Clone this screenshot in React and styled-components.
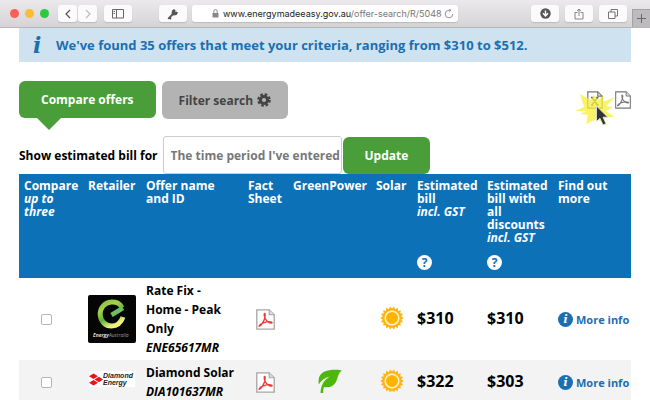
import React, { useState } from 'react'
import styled, { createGlobalStyle } from 'styled-components'

const offers = [
  { name: 'Rate Fix - Home - Peak Only', id: 'ENE65617MR', retailer: 'energy', green: false, bill: '$310', discounted: '$310' },
  { name: 'Diamond Solar', id: 'DIA101637MR', retailer: 'diamond', green: true, bill: '$322', discounted: '$303' },
]

const columns = [64, 58, 102, 45, 83, 41, 70, 71, 78]

function BrowserBar() {
  return (
    <Toolbar>
      <Lights>
        <Light color="#fb5f58" />
        <Light color="#fcbc33" />
        <Light color="#2bc840" />
      </Lights>
      <NavGroup>
        <NavButton aria-label="Back">
          <svg width="8" height="12" viewBox="0 0 8 12"><path d="M6 2L2 6l4 4" fill="none" stroke="#555" strokeWidth="1.2" /></svg>
        </NavButton>
        <NavButton aria-label="Forward">
          <svg width="8" height="12" viewBox="0 0 8 12"><path d="M2 2l4 4-4 4" fill="none" stroke="#bbb" strokeWidth="1.2" /></svg>
        </NavButton>
      </NavGroup>
      <BarButton aria-label="Sidebar">
        <svg width="12" height="10" viewBox="0 0 12 10"><path d="M.5.5h11v8.500H.5zM4.500.5v8.500M1.500 2.500h1.500M1.500 4.500h1.500" fill="none" stroke="#666" /></svg>
      </BarButton>
      <KeyButton aria-label="Passwords">
        <svg width="12" height="12" viewBox="0 0 12 12">
          <path d="M6.500 5.500L1.200 10.800M2.500 9.500l1.500 1.500" stroke="#555" strokeWidth="1.800" />
          <path d="M7 1l4 3.800-1.500 2.200-3 .5-2-2 .5-3z" fill="#555" />
          <circle cx="9" cy="3.200" r=".8" fill="#eee" />
        </svg>
      </KeyButton>
      <Address>
        <svg width="7" height="9" viewBox="0 0 7 9"><path d="M.5 4h6v4.500h-6z" fill="#888" /><path d="M1.800 4V2.300a1.700 1.700 0 013.400 0V4" fill="none" stroke="#888" /></svg>
        <Url>www.energymadeeasy.gov.au<span>/offer-search/R/5048</span></Url>
        <svg width="10" height="10" viewBox="0 0 10 10"><path d="M8.800 5A3.800 3.800 0 115 1.200h1.500M5 0l2 1.300L5.200 3" fill="none" stroke="#888" strokeWidth=".9" /></svg>
      </Address>
      <ToolGroup>
        <BarButton aria-label="Downloads">
          <svg width="11" height="11" viewBox="0 0 11 11"><circle cx="5.500" cy="5.500" r="5.200" fill="#555" /><path d="M5.500 2.500v5M3 5.200l2.500 2.800L8 5.200" fill="none" stroke="#fff" strokeWidth="1.400" /></svg>
        </BarButton>
        <BarButton aria-label="Share">
          <svg width="10" height="12" viewBox="0 0 10 12"><path d="M3.500 4.500h-2.500v6.500h8V4.500H6.500M5 8V1M3 3l2-2 2 2" fill="none" stroke="#777" strokeWidth=".9" /></svg>
        </BarButton>
        <BarButton aria-label="Show tabs">
          <svg width="10" height="10" viewBox="0 0 10 10"><path d="M.5 3h6.500v6.500H.5zM3 3V.5h6.500V7H7" fill="none" stroke="#666" strokeWidth=".9" /></svg>
        </BarButton>
      </ToolGroup>
      <NewTab aria-label="New tab">
        <svg width="9" height="9" viewBox="0 0 9 9"><path d="M4.500 0v9M0 4.500h9" stroke="#666" /></svg>
      </NewTab>
    </Toolbar>
  )
}

function PdfIcon({ stroke = '#a5a5a5', mark = '#ee3a3a', width = 19, height = 21 }) {
  return (
    <svg width={width} height={height} viewBox="0 0 19 21">
      <path d="M.8.8h12.400l5 5v14.400H.8z" fill="#fff" stroke={stroke} strokeWidth="1.300" />
      <path d="M13.200.8v5h5" fill="#ddd" stroke={stroke} strokeWidth="1.100" />
      <path d="M3 17.200c1.500.6 5-5 5.800-8.200.5-2.500.6-4.500-.1-4.500-1 0-.5 3.500.8 5.700 1.500 2.400 4.500 4 6.300 3.800 1.200-.4-.6-1.500-3.600-1.300-3.200.2-8.400 2.300-9.200 4.500z" fill="none" stroke={mark} strokeWidth="1.300" />
    </svg>
  )
}

function ExcelIcon() {
  return (
    <svg width="16" height="18" viewBox="0 0 16 18">
      <path d="M.8.8h10l4.400 4.400v12H.8z" fill="#fff" stroke="#777" strokeWidth="1.200" />
      <path d="M10.800.8v4.400h4.400" fill="none" stroke="#777" strokeWidth="1.200" />
      <path d="M5 6.500l5.500 7.500M10.500 6.500L5 14M4 6.500h2.500M9.200 6.500h2.300M4 14h2.300M9 14h2.500" stroke="#666" strokeWidth="1.400" />
    </svg>
  )
}

function SunIcon() {
  const rays = Array.from({ length: 36 }, (_, i) => {
    const r = i % 2 ? 9.4 : 11.8
    const a = (i * Math.PI) / 18
    return `${12 + r * Math.cos(a)},${12 + r * Math.sin(a)}`
  }).join(' ')
  return (
    <svg width="24" height="24" viewBox="0 0 24 24">
      <polygon points={rays} fill="#fdb515" />
      <circle cx="12" cy="12" r="6.800" fill="#fdb400" stroke="#fff3cf" strokeWidth="1.500" />
    </svg>
  )
}

function LeafIcon() {
  return (
    <svg width="24" height="24" viewBox="0 0 24 24">
      <path d="M24 1.500C22 .6 11 0 5.500 3 .8 6 .2 10 .8 15.500c2-4 6-6.500 11-8C7 10.500 3 14.500 2.500 24h2.700c-.2-2.500.2-4.500.8-6 5 1.200 9.500-.5 12-5 1.800-3.500 2-9 6-11.500z" fill="#4db80b" />
    </svg>
  )
}

function GearIcon() {
  return (
    <svg width="14" height="14" viewBox="0 0 14 14">
      <circle cx="7" cy="7" r="5.600" fill="none" stroke="#444" strokeWidth="2.400" strokeDasharray="2.600 1.798" />
      <circle cx="7" cy="7" r="3.600" fill="none" stroke="#444" strokeWidth="3" />
    </svg>
  )
}

function RetailerLogo({ retailer }) {
  if (retailer === 'diamond') {
    return (
      <DiamondLogo>
        <svg width="14" height="13" viewBox="0 0 14 13">
          <path d="M0 3.200L4.500.5 9 3.200 4.500 6zM5.500 6.500L10 3.800l4 2.700-4 2.700zM0 9.800L4.500 7 9 9.800l-4.500 2.700z" fill="#e3161b" />
        </svg>
        <span>Diamond<br />Energy</span>
      </DiamondLogo>
    )
  }
  return (
    <svg width="48" height="48" viewBox="0 0 48 48" role="img" aria-label="EnergyAustralia">
      <defs>
        <linearGradient id="swirl" x1="0" y1="0" x2=".5" y2="1">
          <stop offset="0" stopColor="#7cc142" />
          <stop offset=".3" stopColor="#a9d14a" />
          <stop offset=".65" stopColor="#5fb03a" />
          <stop offset="1" stopColor="#eef27a" />
        </linearGradient>
      </defs>
      <rect width="48" height="48" rx="2" fill="#050505" />
      <path d="M34 12.500C32 8.500 27.500 6.500 23 7 16.500 7.500 12 13 12.200 19.500 12.500 26.500 17.500 31 23.500 31c5.500 0 9.500-3.500 11.500-9" fill="none" stroke="url(#swirl)" strokeWidth="5" />
      <path d="M23.500 20L35 13" stroke="#6dbd62" strokeWidth="4.500" />
      <text x="5" y="42" fontSize="5" fontWeight="bold" fontStyle="italic" fontFamily="Open Sans, sans-serif" fill="#ddd">Energy<tspan fontWeight="normal" fill="#999">Australia</tspan></text>
    </svg>
  )
}

function Downloads() {
  return (
    <DownloadLinks>
      <DownloadLink href="#excel" aria-label="Download spreadsheet">
        <ExcelIcon />
        <Pointer>
          <svg width="41" height="36" viewBox="0 0 41 36">
            <path d="M0 20l9-4L5 3l11 6 3-5 4 5 6-5-1 7 12-5-9 9 7 1-7 4 8 6-10 0 3 9-10-7-11 5 2-9-8-1 6-3z" fill="#f5ef36" opacity=".75" />
            <path d="M21.500 15v15.500l3.500-3.200 3 6.700 3-1.300-3-6.500h4.800z" fill="#333" stroke="#eee" strokeWidth=".8" />
          </svg>
        </Pointer>
      </DownloadLink>
      <DownloadLink href="#pdf" aria-label="Download PDF">
        <PdfIcon stroke="#777" mark="#777" width={16} height={18} />
      </DownloadLink>
    </DownloadLinks>
  )
}

function OfferRow({ offer }) {
  const [checked, setChecked] = useState(false)
  return (
    <Row>
      <Cell $indent>
        <Check checked={checked} onChange={e => setChecked(e.target.checked)} aria-label={`Compare ${offer.name}`} />
      </Cell>
      <Cell><RetailerLogo retailer={offer.retailer} /></Cell>
      <NameCell>{offer.name}<br /><em>{offer.id}</em></NameCell>
      <Cell $center><a href="#fact-sheet" aria-label="Fact sheet"><PdfIcon /></a></Cell>
      <Cell $center $raised>{offer.green && <LeafIcon />}</Cell>
      <Cell $center $raised><SunIcon /></Cell>
      <Cell><Price>{offer.bill}</Price></Cell>
      <Cell><Price>{offer.discounted}</Price></Cell>
      <Cell>
        <MoreLink href="#more"><InfoBadge>i</InfoBadge>More info</MoreLink>
      </Cell>
    </Row>
  )
}

function App() {
  return (
    <Page>
      <GlobalStyle />
      <BrowserBar />
      <Content>
        <Notice>
          <NoticeIcon>i</NoticeIcon>
          We've found 35 offers that meet your criteria, ranging from $310 to $512.
        </Notice>
        <Tabs>
          <CompareTab>Compare offers</CompareTab>
          <FilterTab>Filter search <GearIcon /></FilterTab>
          <Downloads />
        </Tabs>
        <BillForm onSubmit={e => e.preventDefault()}>
          <label htmlFor="period">Show estimated bill for</label>
          <Period id="period">
            <option>The time period I've entered</option>
          </Period>
          <GreenButton>Update</GreenButton>
        </BillForm>
        <Table>
          <colgroup>
            {columns.map((width, i) => <col key={i} width={width} />)}
          </colgroup>
          <thead>
            <tr>
              <Heading>Compare <em>up to three</em></Heading>
              <Heading>Retailer</Heading>
              <Heading>Offer name<br />and ID</Heading>
              <Heading>Fact Sheet</Heading>
              <Heading>GreenPower</Heading>
              <Heading>Solar</Heading>
              <Heading>
                <HeadingBox><span>Estimated bill<br /><em>incl. GST</em></span><Help aria-label="About estimated bill">?</Help></HeadingBox>
              </Heading>
              <Heading>
                <HeadingBox><span>Estimated bill with all discounts<br /><em>incl. GST</em></span><Help aria-label="About discounts">?</Help></HeadingBox>
              </Heading>
              <Heading>Find out<br />more</Heading>
            </tr>
          </thead>
          <tbody>
            {offers.map(offer => <OfferRow key={offer.id} offer={offer} />)}
          </tbody>
        </Table>
      </Content>
    </Page>
  )
}

export default App

// #region styles
const GlobalStyle = createGlobalStyle`
  * {
    box-sizing: border-box;
  }
  body {
    margin: 0;
    background: #fff;
    color: #000;
    font: bold 12px/19px 'Open Sans', sans-serif;
  }
  button, select {
    font: inherit;
  }
  svg {
    display: block;
    flex: none;
  }
`

const Page = styled.div`
  height: 100vh;
  overflow: hidden;
`

const Toolbar = styled.header`
  display: flex;
  align-items: center;
  height: 28px;
  padding-left: 10px;
  background: linear-gradient(#ebe9eb, #d5d3d5);
  border-bottom: 1px solid #b8b5b8;
`

const Lights = styled.div`
  display: flex;
  gap: 6px;
  margin-right: 9px;
`

const Light = styled.span`
  width: 9px;
  height: 9px;
  border-radius: 50%;
  background: ${props => props.color};
`

const BarButton = styled.button.attrs({ type: 'button' })`
  display: flex;
  align-items: center;
  justify-content: center;
  flex: none;
  width: 28px;
  height: 17px;
  padding: 0;
  border: 0;
  border-radius: 3px;
  background: #fbfbfb;
  box-shadow: 0 1px 1px #bbb;
`

const NavGroup = styled.div`
  display: flex;
  gap: 1px;
  margin-right: 7px;
`

const NavButton = styled(BarButton)`
  width: 19px;
`

const KeyButton = styled(BarButton)`
  margin: 0 5px 0 27px;
`

const Address = styled.div`
  display: flex;
  align-items: center;
  flex: 1;
  min-width: 0;
  height: 17px;
  padding: 0 4px 0 20px;
  border-radius: 3px;
  background: #fff;
  box-shadow: 0 1px 1px #bbb;
`

const Url = styled.span`
  flex: 1;
  margin-left: 4px;
  font: 9px/17px Inter, sans-serif;
  color: #222;
  white-space: nowrap;

  span {
    color: #777;
  }
`

const ToolGroup = styled.div`
  display: flex;
  gap: 6px;
  margin: 0 5px 0 73px;
`

const NewTab = styled(BarButton)`
  align-self: flex-end;
  width: 18px;
  height: 18px;
  border: 1px solid #a5a2a5;
  border-width: 1px 0 0 1px;
  border-radius: 0;
  background: #bebbbe;
  box-shadow: none;
`

const Content = styled.main`
  padding: 0 19px;
`

const Notice = styled.p`
  display: flex;
  align-items: center;
  height: 34px;
  margin: 0 0 19px;
  padding: 0 14px;
  background: #cfe2ef;
  color: #1b6fb1;
  font-size: 13px;
`

const NoticeIcon = styled.span`
  width: 23px;
  font: italic bold 22px/34px 'DejaVu Serif', serif;
`

const Tabs = styled.div`
  display: flex;
  align-items: flex-start;
  gap: 6px;
`

const GreenButton = styled.button`
  padding: 9px 22px;
  border: 0;
  border-radius: 6px;
  background: #4a9e3a;
  color: #fff;
`

const CompareTab = styled(GreenButton).attrs({ type: 'button' })`
  position: relative;

  &::after {
    content: '';
    position: absolute;
    top: 100%;
    left: 18px;
    border: 12px solid transparent;
    border-top-color: #4a9e3a;
    border-bottom: 0;
  }
`

const FilterTab = styled.button.attrs({ type: 'button' })`
  display: flex;
  align-items: center;
  gap: 4px;
  height: 38px;
  padding: 0 17px;
  border: 0;
  border-radius: 6px;
  background: #b3b3b3;
  color: #444;
`

const DownloadLinks = styled.div`
  display: flex;
  gap: 12px;
  margin: 10px 0 0 auto;
`

const DownloadLink = styled.a`
  position: relative;
`

const Pointer = styled.span`
  position: absolute;
  top: 0;
  left: -12px;
`

const BillForm = styled.form`
  display: flex;
  align-items: center;
  margin-top: 17px;
`

const Period = styled.select`
  appearance: none;
  width: 179px;
  height: 38px;
  margin: 0 1px 0 5px;
  padding: 0 0 0 7px;
  border: 1px solid #ccc;
  border-radius: 3px;
  background: #fff;
  color: #777;
`

const Table = styled.table`
  width: 100%;
  table-layout: fixed;
  border-collapse: collapse;
`

const Heading = styled.th`
  height: 104px;
  padding: 5px 0 0 5px;
  background: #0d71b8;
  color: #fff;
  line-height: 13px;
  text-align: left;
  vertical-align: top;
`

const HeadingBox = styled.div`
  display: flex;
  flex-direction: column;
  justify-content: space-between;
  align-items: flex-start;
  height: 91px;
`

const Help = styled.button.attrs({ type: 'button' })`
  width: 15px;
  height: 15px;
  padding: 0;
  border: 0;
  border-radius: 50%;
  background: #fff;
  color: #0d71b8;
  line-height: 15px;
`

const Row = styled.tr`
  &:nth-child(even) {
    background: #f3f3f3;
  }
`

const Cell = styled.td`
  padding: 3px 0 ${props => (props.$raised ? 6 : 3)}px ${props => (props.$center ? 0 : props.$indent ? 22 : 5)}px;
  text-align: left;

  svg {
    margin: ${props => (props.$center ? '0 auto' : 0)};
  }
`

const NameCell = styled(Cell)`
  padding-right: 8px;
`

const Check = styled.input.attrs({ type: 'checkbox' })`
  appearance: none;
  display: block;
  width: 11px;
  height: 11px;
  margin: 0;
  border: 1px solid #b5b5b5;
  border-radius: 2px;
  background: #fff;

  &:checked {
    background: #1b6fb1;
  }
`

const Price = styled.span`
  font-size: 16px;
`

const MoreLink = styled.a`
  display: flex;
  align-items: center;
  gap: 3px;
  color: #1b6fb1;
  font-size: 11px;
  text-decoration: none;
  white-space: nowrap;
`

const InfoBadge = styled.span`
  width: 15px;
  height: 15px;
  border-radius: 50%;
  background: #1b6fb1;
  color: #fff;
  font: italic bold 11px/15px 'DejaVu Serif', serif;
  text-align: center;
`

const DiamondLogo = styled.span`
  display: flex;
  align-items: center;
  width: 46px;
  height: 16px;
  margin: 0 0 6px 1px;
  background: #fff;
  color: #222;
  font: italic bold 7px/7px 'Liberation Sans', sans-serif;
`
// #endregion
